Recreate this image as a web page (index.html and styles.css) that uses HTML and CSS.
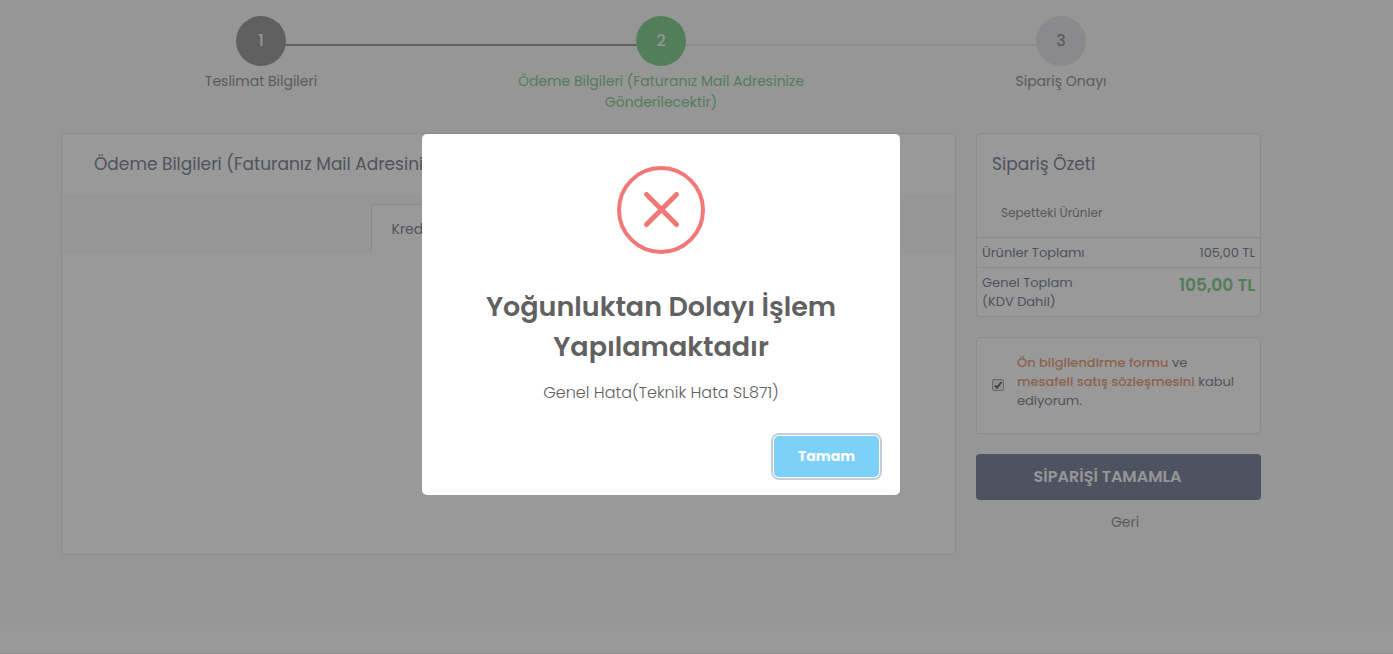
FILE: index.html
```html
<!DOCTYPE html>
<html lang="tr">
<head>
    <meta charset="UTF-8">
    <meta name="viewport" content="width=device-width, initial-scale=1.0">
    <title>Ödeme Bilgileri</title>
    <link rel="stylesheet" href="styles.css">
</head>
<body>
    <main class="page">
        <ol class="steps">
            <li class="step done">
                <span class="step-no">1</span>
                <span class="step-label">Teslimat Bilgileri</span>
            </li>
            <li class="step active">
                <span class="step-no">2</span>
                <span class="step-label">Ödeme Bilgileri (Faturanız Mail Adresinize Gönderilecektir)</span>
            </li>
            <li class="step">
                <span class="step-no">3</span>
                <span class="step-label">Sipariş Onayı</span>
            </li>
        </ol>

        <div class="checkout">
            <section class="card payment">
                <h2 class="payment-title">Ödeme Bilgileri (Faturanız Mail Adresinize Gönderilecektir)</h2>
                <div class="tabs">
                    <button type="button" class="tab">Kredi Kartı</button>
                </div>
            </section>

            <aside class="sidebar">
                <section class="card summary">
                    <h2 class="summary-title">Sipariş Özeti</h2>
                    <p class="summary-sub">Sepetteki Ürünler</p>
                    <table class="totals">
                        <tr>
                            <th>Ürünler Toplamı</th>
                            <td>105,00 TL</td>
                        </tr>
                        <tr>
                            <th>Genel Toplam<br>(KDV Dahil)</th>
                            <td class="grand">105,00 TL</td>
                        </tr>
                    </table>
                </section>

                <div class="card terms">
                    <input type="checkbox" id="terms" class="terms-check" checked>
                    <label for="terms"><a href="#">Ön bilgilendirme formu</a> ve <a href="#">mesafeli satış sözleşmesini</a> kabul ediyorum.</label>
                </div>

                <button type="button" class="complete">SİPARİŞİ TAMAMLA</button>
                <a href="#" class="back">Geri</a>
            </aside>
        </div>
    </main>
    <footer class="footer"></footer>

    <div class="overlay">
        <div class="modal" role="alertdialog" aria-modal="true" aria-labelledby="modal-title" aria-describedby="modal-text">
            <svg class="modal-icon" viewBox="0 0 88 88" aria-hidden="true">
                <circle cx="44" cy="44" r="42" stroke-width="4"/>
                <path d="M29.5 28.5L59.5 58.5M59.5 28.5L29.5 58.5" stroke-width="5" stroke-linecap="round"/>
            </svg>
            <h1 class="modal-title" id="modal-title">Yoğunluktan Dolayı İşlem Yapılamaktadır</h1>
            <p class="modal-text" id="modal-text">Genel Hata(Teknik Hata SL871)</p>
            <div class="modal-footer">
                <button type="button" class="modal-button">Tamam</button>
            </div>
        </div>
    </div>
</body>
</html>
```
FILE: styles.css
```css
* {
    box-sizing: border-box;
}
body {
    margin: 0;
    min-height: 100vh;
    display: flex;
    flex-direction: column;
    font-family: Poppins, Inter, "Noto Sans", sans-serif;
    font-size: 14px;
    line-height: 21px;
    color: #858b9d;
    background-color: #fafafa;
}
h1, h2, p {
    margin: 0;
    font-weight: 400;
}
button {
    font-family: inherit;
    cursor: pointer;
}
a {
    text-decoration: none;
}
.page {
    flex: 1;
    padding: 16px 132px 0 61px;
}

/* adımlar */
.steps {
    display: grid;
    grid-template-columns: repeat(3, 1fr);
    margin: 0 0 20px;
    padding: 0;
    list-style: none;
}
.step {
    position: relative;
    display: flex;
    flex-direction: column;
    align-items: center;
    gap: 5px;
    color: #999;
    text-align: center;
}
.step:not(:last-child)::after {
    content: "";
    position: absolute;
    top: 28px;
    left: 50%;
    width: 100%;
    height: 2px;
    background-color: #e6e6e6;
}
.step.done::after {
    background-color: #a0a0a0;
}
.step-no {
    position: relative;
    z-index: 1;
    width: 50px;
    height: 50px;
    border-radius: 50%;
    background-color: #e6e7ea;
    font-size: 16px;
    font-weight: 500;
    line-height: 50px;
}
.done .step-no {
    background-color: #a0a0a0;
    color: #fafafa;
}
.active .step-no {
    background-color: #8ad296;
    color: #fafafa;
}
.active {
    color: #8ad296;
}
.step-label {
    max-width: 310px;
}

.checkout {
    display: grid;
    grid-template-columns: 1fr 285px;
    gap: 20px;
}
.card {
    border: 1px solid #e8e8e8;
    border-radius: 4px;
    background-color: #fff;
}
.payment {
    min-height: 422px;
}
.payment-title {
    padding: 18px 32px;
    font-size: 17px;
    line-height: 24px;
}
.tabs {
    display: flex;
    justify-content: center;
    padding-top: 10px;
    background-color: #fafafa;
}
.tab {
    width: 276px;
    height: 50px;
    padding: 0 20px;
    border: 1px solid #e8e8e8;
    border-bottom: 0;
    border-radius: 4px 4px 0 0;
    background-color: #fff;
    color: inherit;
    font-size: 14px;
    text-align: left;
}

/* sipariş özeti */
.sidebar {
    display: flex;
    flex-direction: column;
    gap: 20px;
}
.summary-title {
    padding: 18px 15px;
    font-size: 17px;
    line-height: 24px;
}
.summary-sub {
    padding: 8px 24px 14px;
    font-size: 12px;
    color: #959595;
}
.totals {
    width: 100%;
    border-collapse: collapse;
    font-size: 13px;
    line-height: 19px;
}
.totals th,
.totals td {
    padding: 5px;
    border-top: 1px solid #e8e8e8;
    font-weight: 400;
    text-align: left;
    vertical-align: top;
}
.totals td {
    text-align: right;
}
.totals .grand {
    padding-top: 8px;
    font-size: 17px;
    font-weight: 600;
    color: #8ad296;
}
.terms {
    display: flex;
    align-items: center;
    gap: 13px;
    padding: 15px 15px 23px;
    font-size: 13px;
    line-height: 19px;
}
.terms a {
    color: #eba680;
    font-weight: 500;
}
.terms-check {
    appearance: none;
    flex: none;
    width: 12px;
    height: 12px;
    margin: 6px 0 0;
    border: 1px solid #a9afb5;
    border-radius: 2px;
    background: #eef0f2 url("data:image/svg+xml,%3Csvg xmlns='http://www.w3.org/2000/svg' viewBox='0 0 10 10'%3E%3Cpath d='M2 5.5l2 2.2L8.5 2' fill='none' stroke='%23696f82' stroke-width='2'/%3E%3C/svg%3E");
}
.complete {
    height: 46px;
    padding: 0 22px 2px 0;
    border: 0;
    border-radius: 4px;
    background-color: #828aa3;
    color: #fafafa;
    font-size: 16px;
    font-weight: 600;
}
.back {
    margin-top: -8px;
    padding-left: 13px;
    color: #999;
    text-align: center;
}
.footer {
    height: 29px;
    border-bottom: 1px solid #eee;
    background-color: #fff;
}

/* hata penceresi */
.overlay {
    position: fixed;
    inset: 0;
    z-index: 10;
    display: flex;
    align-items: center;
    justify-content: center;
    padding: 0 71px 25px 0;
    background-color: rgba(0, 0, 0, 0.4);
}
.modal {
    width: 478px;
    max-width: 100%;
    padding-top: 32px;
    border-radius: 5px;
    background-color: #fff;
    color: #616161;
    text-align: center;
}
.modal-icon {
    display: block;
    width: 88px;
    height: 88px;
    margin: 0 auto 33px;
    fill: none;
    stroke: #f27878;
}
.modal-title {
    padding: 0 20px;
    font-size: 27px;
    font-weight: 600;
    line-height: 40px;
}
.modal-text {
    margin-top: 14px;
    font-size: 16px;
    font-weight: 300;
    line-height: 24px;
}
.modal-footer {
    display: flex;
    justify-content: flex-end;
    padding: 31px 21px 18px;
}
.modal-button {
    height: 41px;
    padding: 0 24px;
    border: 0;
    border-radius: 5px;
    background-color: #7cd1f9;
    box-shadow: 0 0 0 1px #fff, 0 0 0 3px #c3cfdb;
    color: #fff;
    font-size: 14px;
    font-weight: 700;
}
```
